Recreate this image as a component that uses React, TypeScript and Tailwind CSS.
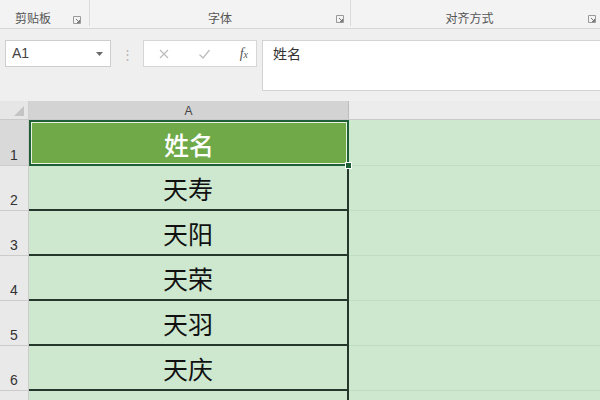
import React from 'react';

const cjk = { fontFamily: '"Noto Sans CJK SC", "Noto Sans", sans-serif' };

function Launcher() {
  return (
    <svg width="8" height="8" viewBox="0 0 8 8" className="shrink-0">
      <path d="M0.5 0.5h7v7h-7z" fill="none" stroke="#9a9a9a" strokeWidth="1" />
      <path d="M3 3l3.5 3.5M6.5 4v2.5H4" fill="none" stroke="#777" strokeWidth="1" />
    </svg>
  );
}

const rows = [
  { n: 1, name: '姓名' },
  { n: 2, name: '天寿' },
  { n: 3, name: '天阳' },
  { n: 4, name: '天荣' },
  { n: 5, name: '天羽' },
  { n: 6, name: '天庆' },
  { n: 7, name: '' },
];

export default function App() {
  return (
    <div className="w-[600px] h-[400px] overflow-hidden bg-[#efefef] flex flex-col" style={cjk}>
      {/* Ribbon group labels */}
      <div className="h-[29px] shrink-0 flex bg-[#f3f3f3] border-b border-[#d6d6d6] text-[12px] text-[#555]">
        <div className="w-[90px] flex items-end pb-[2px] pl-[15px] pr-[8px] justify-between border-r border-[#dadada] mb-[2px]">
          <span className="leading-none">剪贴板</span>
          <Launcher />
        </div>
        <div className="w-[261px] relative flex items-end pb-[2px] justify-center border-r border-[#dadada] mb-[2px]">
          <span className="leading-none">字体</span>
          <div className="absolute right-[6px] bottom-[3px]"><Launcher /></div>
        </div>
        <div className="flex-1 relative flex items-end pb-[2px] justify-center mb-[2px]">
          <span className="leading-none ml-[-12px]">对齐方式</span>
          <div className="absolute right-[4px] bottom-[3px]"><Launcher /></div>
        </div>
      </div>

      {/* Formula bar */}
      <div className="h-[72px] shrink-0 flex items-start pt-[11px] pl-[5px]">
        <div className="w-[106px] h-[27px] bg-white border border-[#cdcdcd] flex items-center justify-between pl-[6px] pr-[7px]">
          <span className="text-[14px] text-[#444]" style={{ fontFamily: '"Liberation Sans", sans-serif' }}>A1</span>
          <svg width="7" height="4" viewBox="0 0 7 4">
            <path d="M0 0h7L3.5 4z" fill="#6a6a6a" />
          </svg>
        </div>
        <div className="w-[32px] h-[27px] flex items-center justify-center text-[#b5b5b5] text-[13px]">⋮</div>
        <div className="w-[114px] h-[27px] bg-white border border-[#d6d6d6] flex items-center pl-[14px] pr-[8px] justify-between">
          <svg width="12" height="12" viewBox="0 0 12 12">
            <path d="M2 2l8 8M10 2l-8 8" stroke="#bdbdbd" strokeWidth="1.3" />
          </svg>
          <svg width="13" height="12" viewBox="0 0 13 12">
            <path d="M1.5 6.5l3.5 3.5L11.5 2" fill="none" stroke="#bdbdbd" strokeWidth="1.3" />
          </svg>
          <span className="text-[14px] italic text-[#555] leading-none" style={{ fontFamily: '"Liberation Serif", serif' }}>
            f<span className="text-[10px]">x</span>
          </span>
        </div>
        <div className="flex-1 ml-[5px] h-[51px] bg-white border border-[#d3d3d3] border-r-0 pl-[10px] pt-[2px] text-[14px] text-[#333]">
          姓名
        </div>
      </div>

      {/* Column header */}
      <div className="h-[19px] shrink-0 flex border-b border-[#c9c9c9]">
        <div className="w-[29px] bg-[#e6e6e6] border-r border-[#cfcfcf] relative">
          <svg width="10" height="10" viewBox="0 0 10 10" className="absolute right-[4px] bottom-[3px]">
            <path d="M10 0V10H0z" fill="#c4c4c4" />
          </svg>
        </div>
        <div className="w-[320px] bg-[#d3d3d3] border-r border-[#bdbdbd] flex items-center justify-center pt-[2px] text-[12px] text-[#444]" style={{ fontFamily: '"Liberation Sans", sans-serif' }}>
          A
        </div>
        <div className="flex-1 bg-[#ececec]" />
      </div>

      {/* Grid rows */}
      <div className="flex-1 flex flex-col bg-[#cde8cf]">
        {rows.map((r) => (
          <div key={r.n} className={`${r.n === 1 ? 'h-[46px]' : 'h-[45px]'} shrink-0 flex`}>
            <div
              className={`w-[29px] shrink-0 border-r border-b border-[#cbcbcb] flex items-end justify-center pb-[3px] text-[14px] leading-none text-[#333] ${r.n === 1 ? 'bg-[#d9d9d9]' : 'bg-[#e9e9e9]'}`}
              style={{ fontFamily: '"Liberation Sans", sans-serif' }}
            >
              {r.n < 7 ? r.n : ''}
            </div>
            {r.n === 1 ? (
              <div className="w-[320px] shrink-0 relative bg-[#6fa948] border-2 border-[#1f5f36]">
                <div className="absolute inset-0 border border-[#e8f3e2] flex items-center justify-center pt-[3px] text-[25px] text-white font-medium">
                  {r.name}
                </div>
                <div className="absolute right-[-5px] bottom-[-5px] w-[7px] h-[7px] bg-[#1f5f36] border border-white" />
              </div>
            ) : (
              <div className="w-[320px] shrink-0 bg-[#cde8cf] border-r-2 border-b-2 border-[#25372b] flex items-center justify-center pt-[3px] text-[25px] text-[#111]">
                {r.name}
              </div>
            )}
            <div className="flex-1 bg-[#cde8cf] border-b border-[#c0dcc3]" />
          </div>
        ))}
      </div>
    </div>
  );
}
